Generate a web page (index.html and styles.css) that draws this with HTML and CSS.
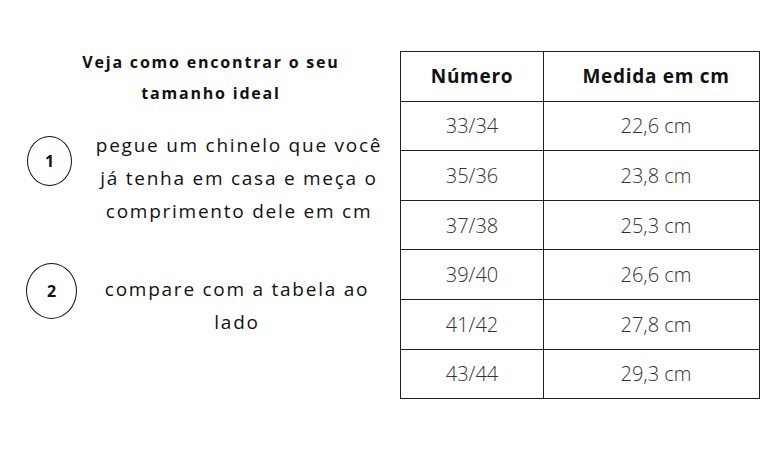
FILE: index.html
```
<!DOCTYPE html>
<html lang="pt">
<head>
<meta charset="utf-8">
<link rel="stylesheet" href="styles.css">
</head>
<body>
<div class="page">
  <section class="guide">
    <h2 class="guide-title">Veja como encontrar o seu<br>tamanho ideal</h2>
    <div class="step step-one">
      <div class="badge badge-one">1</div>
      <p class="step-text">pegue um chinelo que você<br>já tenha em casa e meça o<br>comprimento dele em cm</p>
    </div>
    <div class="step step-two">
      <div class="badge badge-two">2</div>
      <p class="step-text">compare com a tabela ao<br>lado</p>
    </div>
  </section>
  <table class="sizes">
    <thead>
      <tr><th class="col-num">Número</th><th class="col-cm">Medida em cm</th></tr>
    </thead>
    <tbody>
      <tr><td>33/34</td><td>22,6 cm</td></tr>
      <tr><td>35/36</td><td>23,8 cm</td></tr>
      <tr><td>37/38</td><td>25,3 cm</td></tr>
      <tr><td>39/40</td><td>26,6 cm</td></tr>
      <tr><td>41/42</td><td>27,8 cm</td></tr>
      <tr><td>43/44</td><td>29,3 cm</td></tr>
    </tbody>
  </table>
</div>
</body>
</html>
```
FILE: styles.css
```
* { box-sizing: border-box; }
html, body { margin: 0; padding: 0; background: #fff; }
body { width: 780px; height: 450px; overflow: hidden; color: #111; font-family: "Open Sans", sans-serif; }
.page { display: flex; align-items: flex-start; }
.guide { width: 400px; padding-top: 47px; }
.guide-title { margin: 0; padding-left: 22px; font-size: 16px; line-height: 31px; font-weight: 700; text-align: center; letter-spacing: 1.8px; }
.step { display: flex; align-items: flex-start; }
.step-one { margin-top: 20px; padding-left: 27px; }
.step-two { margin-top: 45px; padding-left: 26px; }
.badge { flex: none; display: flex; align-items: center; justify-content: center; border: 1.5px solid #111; border-radius: 50%; font-family: "Open Sans", sans-serif; font-weight: 700; font-size: 16px; }
.badge-one { width: 45px; height: 50px; margin-top: 7px; }
.badge-two { width: 51px; height: 56px; margin-top: -10px; }
.step-text { margin: 0; width: 300px; text-align: center; font-size: 19px; line-height: 33px; letter-spacing: 1.75px; color: #111; }
.step-one .step-text { margin-left: 17px; }
.step-two .step-text { margin-left: 10px; }
.sizes { margin-top: 51px; border-collapse: collapse; width: 360px; }
.sizes th, .sizes td { border: 1.3px solid #222; text-align: center; padding: 0; height: 49.6px; }
.sizes th:last-child, .sizes td:last-child { padding-left: 9px; }
.sizes th { font-family: "Open Sans", sans-serif; font-weight: 700; font-size: 19px; letter-spacing: 0.7px; color: #111; }
.col-num { width: 143px; }
.sizes td { font-family: "Open Sans", sans-serif; font-weight: 300; font-size: 20px; color: #333; }
```
